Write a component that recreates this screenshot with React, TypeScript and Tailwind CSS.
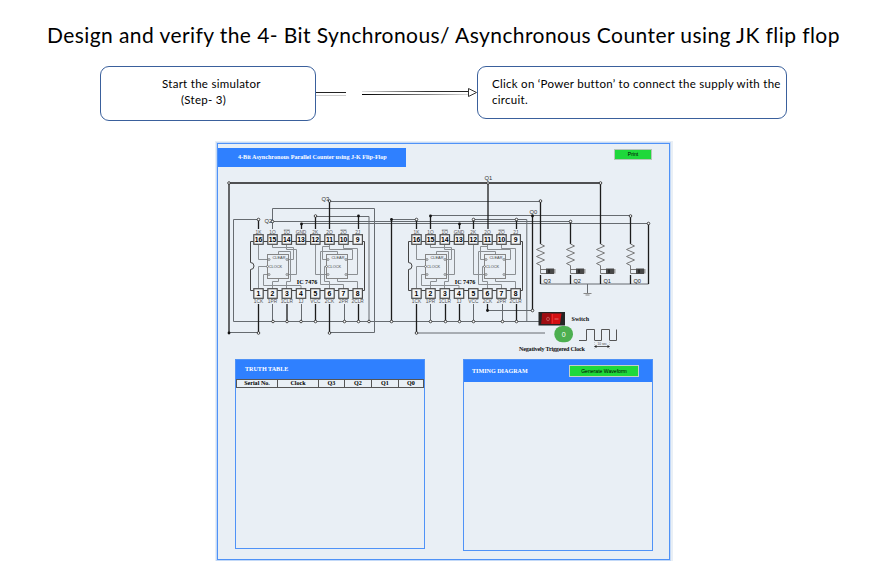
import React from "react";

type Pt = [number, number];

const pinX = [258.5, 272.5, 286.8, 301, 315.3, 329.5, 343.5, 357.7];
const topPins = ["16", "15", "14", "13", "12", "11", "10", "9"];
const bottomPins = ["1", "2", "3", "4", "5", "6", "7", "8"];
const topNames = ["1K", "1Q", "1Q", "GND", "2K", "2Q", "2Q", "2J"];
const bottomNames = ["1CK", "1PR", "1CLR", "1J", "VCC", "2CK", "2PR", "2CLR"];

function Latch({ x, y }: { x: number; y: number }) {
  return (
    <g>
      <rect x={x} y={y} width="21" height="24" fill="none" stroke="#858585" />
      <g fill="#444" fontSize="3.9" fontFamily="Liberation Sans, sans-serif">
        <text x={x + 5} y={y + 4.3}>CLEAR</text>
        <text x={x + 1.3} y={y + 13.6}>CLOCK</text>
      </g>
      {([[1.5, 5], [0, 12], [1.5, 20], [19.5, 5], [19.5, 20]] as Pt[]).map(([a, b]) => (
        <circle key={`${a}-${b}`} cx={x + a} cy={y + b} r="1" fill="#e9eff5" stroke="#666" strokeWidth="0.7" />
      ))}
    </g>
  );
}

function Chip({ dx }: { dx: number }) {
  return (
    <g transform={`translate(${dx} 0)`}>
      <path d="M250.5 241.5H364.5V290.5H250.5V269.5A3.5 3.5 0 0 0 250.5 262.5Z" fill="none" stroke="#444" />
      <g fill="none" stroke="#8b8f93">
        <path d="M258.5 245V259.5H268M258.5 288V266.5H268M268 274.5H263.5V285.5H301V289M272.5 289V281.5H278.5V278.5M278.5 254.5V251.5H290.5V281.5H286.5V289M272.5 245V247.5H293.5V259.5H289M286.5 245V249.5H296.5V274.5H289" />
        <path d="M315.5 245V274.5H327M329.5 245V249.5H352.5V259.5H348M343.5 245V248.5H357.5V274.5H348M329.5 289V281.5H324.5V266.5H327M343.5 289V284.5H320.5V251.5H337.5V254.5M357.5 289V281.5H337.5V278.5M327 259.5H322.5V246.5H329.5" />
      </g>
      <Latch x={267.5} y={254.5} />
      <Latch x={326.5} y={254.5} />
      {pinX.map((x, i) => (
        <g key={x} textAnchor="middle" fontFamily="Liberation Sans, sans-serif">
          <rect x={x - 4.7} y="234.7" width="9.4" height="9.6" fill="#f3f5f7" stroke="#4c4c4c" strokeWidth="1.2" />
          <rect x={x - 4.7} y="288.7" width="9.4" height="9.6" fill="#f3f5f7" stroke="#4c4c4c" strokeWidth="1.2" />
          <text x={x} y="242.1" fontSize="6.8" fontWeight="700">{topPins[i]}</text>
          <text x={x} y="296.1" fontSize="6.8" fontWeight="700">{bottomPins[i]}</text>
          <text x={x} y="233.8" fontSize="4.8" fill="#555">{topNames[i]}</text>
          {(i === 2 || i === 6) && <path d={`M${x - 3} 230H${x + 3}`} stroke="#666" strokeWidth="0.6" />}
          <text x={x} y="303" fontSize="4.8" fill="#555">{bottomNames[i]}</text>
        </g>
      ))}
      <text x="296.8" y="283.8" fontSize="6.1" fontWeight="700" fontFamily="Liberation Serif, serif">IC 7476</text>
    </g>
  );
}

const strong = [
  "M258.5 333V304M229 333V183H600.5V244",
  "M488 183V229",
  "M329.5 201V229M329.5 333V304",
  "M540.5 201V244M570.5 221.5V244M630.5 216V244M648.5 223.5V284",
  "M258.5 219.5V229M301.5 224V229M315.5 216V229M358.5 216V229",
  "M416.5 229V219.5M391.5 219.5V321.5M430.5 216V229M459.5 224V229M516.5 219.5V229M473.5 219.5V229",
  "M416.5 304V333M487.5 304V310.5M532.5 310.5V216",
  "M287 304V321.5M315.5 304V321.5M358.5 304V321.5M445.5 304V321.5M459.5 304V321.5M516.5 304V321.5",
  "M540.5 275V284M570.5 275V284M600.5 275V284M630.5 275V284",
];

const fine = [
  "M329.5 201.5H540.5M229 332.5H258.5",
  "M272.5 229V208.5H374.5V332.5H329.5",
  "M272.5 221.5H570.5M301.5 223.5H648.5",
  "M315.5 216.5H369V321.5",
  "M258.5 219.5H233.5V321.5H540",
  "M391.5 219.5H416.5M487.5 310.5H532.5",
  "M430.5 215.5H630.5M473.5 219.5H526.8V321.5",
  "M416.5 333H545",
  "M272.5 304V321.5M301.5 304V321.5M344.5 304V321.5M430.5 304V321.5M473.5 304V321.5M502.5 304V321.5",
  "M540.5 284H648.5M587.5 284V293",
];

const openNodes: Pt[] = [
  [229, 183], [488, 183], [600.5, 183], [329.5, 201], [540.5, 201], [258.5, 219.5], [272.5, 221.5],
  [315.5, 216], [258.5, 333], [329.5, 333], [369, 321.5], [273, 321.5], [287, 321.5], [301, 321.5],
  [315.5, 321.5], [344.5, 321.5], [358.5, 321.5], [391.5, 321.5], [416.5, 219.5], [473.5, 219.5],
  [516.5, 219.5], [430.5, 321.5], [445.5, 321.5], [459.5, 321.5], [473.5, 321.5], [502.5, 321.5],
  [516.5, 321.5], [416.5, 333], [532.5, 310.5], [570.5, 221.5], [630.5, 216], [648.5, 223.5],
];
const solidNodes: Pt[] = [
  [229, 333], [301.5, 224], [358.5, 216], [391.5, 219.5], [430.5, 216], [459.5, 224], [532.5, 216], [487.5, 310.5],
];

const lamps: [number, string][] = [[540.5, "Q3"], [570.5, "Q2"], [600.5, "Q1"], [630.5, "Q0"]];

function Circuit() {
  return (
    <svg className="block h-[192px] w-[451px]" viewBox="218 167 451 192">
      <g fill="none" stroke="#666b70">{fine.map((d) => <path key={d} d={d} />)}</g>
      <g fill="none" stroke="#1c1c1c" strokeWidth="1.3">{strong.map((d) => <path key={d} d={d} />)}</g>
      <Chip dx={0} />
      <Chip dx={158} />
      {openNodes.map(([x, y]) => <circle key={`${x},${y}`} cx={x} cy={y} r="1.3" fill="#fff" stroke="#222" strokeWidth="0.8" />)}
      {solidNodes.map(([x, y]) => <circle key={`${x},${y}`} cx={x} cy={y} r="1.4" fill="#111" />)}
      {lamps.map(([x, label]) => (
        <g key={label}>
          <path d={`M${x} 244l4 2l-8 3.5l8 3.5l-8 3.5l8 3.5l-8 3.5l4 2v8`} fill="none" stroke="#777" />
          <path d={`M${x} 269.5h6M${x} 273.5h6`} fill="none" stroke="#777" />
          <rect x={x + 5.5} y="268.5" width="8" height="5.5" fill="#484848" />
          <path d={`M${x + 8.5} 269.5v3.5`} stroke="#222" strokeWidth="1.5" />
          <path d={`M${x + 13.5} 269h1.5v4.5h-1.5z`} fill="#999" />
          <text x={x + 3} y="283.3" fontSize="5.6" fontFamily="Liberation Sans, sans-serif" fill="#222">{label}</text>
        </g>
      ))}
      <path d="M583.5 293.5H591.5M585.5 295H589.5" stroke="#888" />
      <g fontSize="5.8" fontFamily="Liberation Sans, sans-serif" fill="#333">
        <text x="484.5" y="180.3">Q1</text>
        <text x="321.5" y="200.5">Q3</text>
        <text x="264.5" y="223">Q2</text>
        <text x="529.5" y="214">Q0</text>
      </g>
      <rect x="538.5" y="312" width="26.5" height="13.5" fill="#252525" />
      <path d="M542.5 313.5H561.5L560 324H541.5Z" fill="#d30f12" />
      <path d="M542 313.5H551V324H541.5Z" fill="#9f0d12" />
      <path d="M552.5 314V323.5" stroke="#ef3434" strokeWidth="0.7" />
      <ellipse cx="548" cy="319" rx="1.4" ry="1.8" fill="none" stroke="#d07070" strokeWidth="0.7" />
      <path d="M554.5 319H558.5" stroke="#e88080" strokeWidth="0.8" />
      <rect x="554.3" y="326" width="18.7" height="16.3" rx="8" fill="#4caf50" />
      <text x="563.7" y="336.8" fontSize="7" textAnchor="middle" fill="#fff" fontFamily="Liberation Sans, sans-serif">0</text>
      <path d="M579 340.5H586.5V329.5H594.5V340.5H601.5V329.5H609.5V340.5H616.5V329.5" fill="none" stroke="#555" />
      <path d="M594.5 340V349M609.5 340V349" stroke="#aaa" strokeWidth="0.5" strokeDasharray="1 1" />
      <path d="M595 346.5H609" stroke="#333" strokeWidth="0.8" />
      <path d="M594 346.5l2.5-1.5v3zM610 346.5l-2.5-1.5v3z" fill="#222" />
      <text x="597.5" y="345.3" fontSize="3.2" fill="#444" fontFamily="Liberation Sans, sans-serif">10 sec</text>
      <g fontSize="6.1" fontWeight="700" fontFamily="Liberation Serif, serif" fill="#111">
        <text x="571.5" y="321.3">Switch</text>
        <text x="519" y="351.4" textLength="66">Negatively Triggered Clock</text>
      </g>
    </svg>
  );
}

const columns: [string, string][] = [
  ["Serial No.", "w-[40px]"], ["Clock", "w-[41px]"], ["Q3", "w-[26px]"], ["Q2", "w-[27px]"], ["Q1", "w-[27px]"], ["Q0", "flex-1"],
];

export default function App() {
  return (
    <main className="flex h-[569px] w-[884px] flex-col overflow-hidden bg-white text-black">
      <h1 className="ml-[47px] mt-[21px] h-[27px] whitespace-nowrap font-['Lato',sans-serif] text-[21px] font-normal leading-[27px] tracking-[0.42px]">
        Design and verify the 4- Bit Synchronous/ Asynchronous Counter using JK flip flop
      </h1>
      <div className="ml-[100px] mt-[18px] flex h-[55px] items-start font-['Lato',sans-serif] text-[11.5px] leading-4 tracking-[0.28px]">
        <div className="h-[55px] w-[216px] rounded-[9px] border border-[#3a609c] pt-[9px]">
          <p className="pl-[61px]">Start the simulator</p>
          <p className="pl-[80px]">(Step- 3)</p>
        </div>
        <svg className="h-[55px] w-[161px] shrink-0" viewBox="316 66 161 55">
          <defs>
            <linearGradient id="upper" x1="362" x2="470" y1="0" y2="0" gradientUnits="userSpaceOnUse">
              <stop offset="0" stopColor="#ddd" /><stop offset="0.6" stopColor="#333" /><stop offset="1" stopColor="#222" />
            </linearGradient>
            <linearGradient id="lower" x1="362" x2="470" y1="0" y2="0" gradientUnits="userSpaceOnUse">
              <stop offset="0" stopColor="#000" /><stop offset="0.8" stopColor="#aaa" /><stop offset="1" stopColor="#ddd" />
            </linearGradient>
          </defs>
          <path d="M316 92h30v1h-30z" fill="#222" />
          <path d="M316 95h30v1h-30z" fill="#ccc" />
          <path d="M362 91h107v1h-107z" fill="url(#upper)" />
          <path d="M362 94h107v1h-107z" fill="url(#lower)" />
          <path d="M468.5 88.5L476.5 92.5L468.5 96.5Z" fill="#fff" stroke="#333" />
        </svg>
        <div className="h-[53px] w-[310px] rounded-[9px] border border-[#3a609c] pl-[14px] pt-[9px]">
          <p className="whitespace-nowrap">Click on ‘Power button’ to connect the supply with the</p>
          <p>circuit.</p>
        </div>
      </div>
      <section className="ml-[215px] mt-[20px] h-[420px] w-[458px] bg-[#e9eff5] p-[2px] font-['Liberation_Serif',serif]">
        <div className="h-[417px] w-[453px] border border-[#4f92f7] shadow-[0_0_0_1px_#c3d9f8]">
          <header className="flex h-[23px] items-start justify-between pt-[4px]">
            <div className="h-[19px] w-[188px] whitespace-nowrap bg-[#2f80ff] pl-[20px] text-[6.1px] font-bold leading-[18px] text-white">
              4-Bit Asynchronous Parallel Counter using J-K Flip-Flop
            </div>
            <button className="mr-[17px] mt-[1px] h-[11px] w-[38px] border border-[#b6c5b8] bg-[#1fd83b] font-['Liberation_Sans',sans-serif] text-[5px] leading-[9px] text-black">Print</button>
          </header>
          <Circuit />
          <div className="flex items-start pl-[17px]">
            <section className="h-[190px] w-[190px] border border-[#4f92f7]">
              <h2 className="h-[19px] bg-[#2f80ff] pl-[9px] text-[6.1px] font-bold leading-[18px] text-white">TRUTH TABLE</h2>
              <div className="flex h-[9px] border border-[#555] text-center text-[6.1px] font-bold leading-[7px]">
                {columns.map(([name, width], i) => (
                  <span key={name} className={`${width} ${i ? "border-l border-[#555]" : ""}`}>{name}</span>
                ))}
              </div>
            </section>
            <section className="ml-[38px] h-[192px] w-[190px] border border-[#4f92f7]">
              <div className="flex h-[22px] items-center justify-between bg-[#2f80ff] pl-[8px] pr-[13px]">
                <h2 className="text-[6.1px] font-bold leading-[20px] text-white">TIMING DIAGRAM</h2>
                <button className="h-[12px] w-[70px] border border-[#c4d2c6] bg-[#1fd83b] font-['Liberation_Sans',sans-serif] text-[5.1px] leading-[9px] text-black">Generate Waveform</button>
              </div>
            </section>
          </div>
        </div>
      </section>
    </main>
  );
}
